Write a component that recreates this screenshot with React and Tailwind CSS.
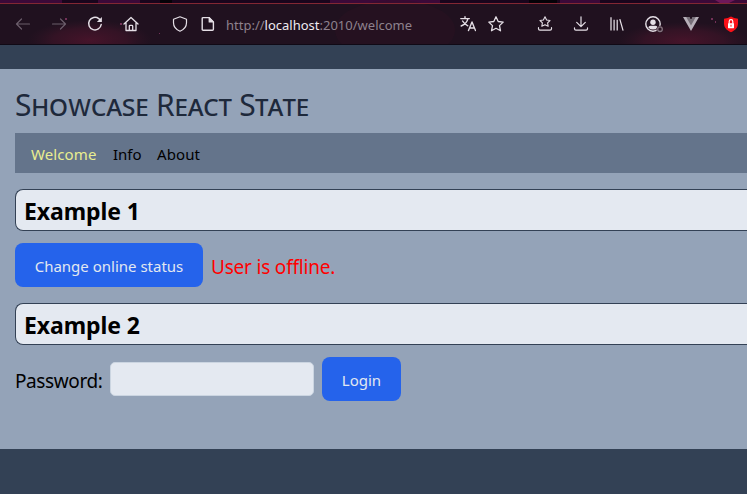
import React from "react";

function Icon({ children, className = "" }) {
  return (
    <svg viewBox="0 0 16 16" width="16" height="16" fill="none" stroke="currentColor" strokeWidth="1.2" strokeLinecap="round" strokeLinejoin="round" className={`block shrink-0 ${className}`}>
      {children}
    </svg>
  );
}

const STAR = "M8 .8 10.2 5.5 15.2 6.1 11.5 9.6 12.5 14.8 8 12.3 3.5 14.8 4.5 9.6 .8 6.1 5.8 5.5Z";

function ThemeArtwork() {
  return (
    <svg className="absolute inset-0" width="747" height="45" viewBox="0 0 747 45">
      <defs>
        <radialGradient id="glow">
          <stop offset="0" stopColor="#4a142b" stopOpacity=".9" />
          <stop offset=".6" stopColor="#3e1428" stopOpacity=".65" />
          <stop offset="1" stopColor="#321526" stopOpacity="0" />
        </radialGradient>
      </defs>
      <rect width="747" height="45" fill="#20111f" />
      <rect width="747" height="3" fill="#19051c" />
      <path d="M0 0H62V3H0ZM98 0H140V3H98ZM330 0H440V3H330ZM560 0H600V3H560ZM650 0H747V3H650Z" fill="#3c0938" />
      <path d="M160 0H172V3H160ZM529 0H557V3H529Z" fill="#050207" />
      <ellipse cx="90" cy="40" rx="62" ry="20" fill="url(#glow)" />
      <ellipse cx="684" cy="41" rx="66" ry="19" fill="url(#glow)" />
      <ellipse cx="395" cy="30" rx="60" ry="30" fill="#301223" opacity=".35" />
      <path d="M715 0H735L729 3H720Z" fill="#85206a" opacity=".7" />
      <g fill="#733158">
        <rect x="65" y="18" width="2" height="2" />
        <rect x="120" y="23" width="2" height="2" />
        <rect x="711" y="18" width="2" height="2" />
        <rect x="715" y="21" width="1" height="2" />
        <rect x="159" y="33" width="1" height="1" />
      </g>
      <rect y="3" width="747" height="1" fill="#822733" />
      <rect y="44" width="747" height="1" fill="#100915" />
    </svg>
  );
}

function BrowserBar() {
  return (
    <header className="relative h-[45px] overflow-hidden text-[#e5dfe6]">
      <ThemeArtwork />
      <div className="relative flex h-[45px] items-center pt-[3px] pl-[15px]">
        <Icon className="text-[#6b5e6b]"><path d="M14.500 8H1.500M6.500 3 1.500 8l5 5" /></Icon>
        <Icon className="ml-5 text-[#6b5e6b]"><path d="M1.500 8h13M9.500 3l5 5-5 5" /></Icon>
        <Icon className="ml-5">
          <path d="M14.200 8.500A6.300 6.300 0 1 1 11.800 2.600L13 3.700" strokeWidth="1.500" />
          <path d="M14.900 1v5h-5Z" fill="currentColor" stroke="none" />
        </Icon>
        <Icon className="ml-5">
          <path d="M1 8 8 1.500 15 8M3 6.800v7.700h10V6.800M6.300 14.300v-4.200q0-.8.8-.8h1.800q.8 0 .8.8v4.200" strokeWidth="1.300" />
        </Icon>
        <Icon className="ml-[33px]">
          <path d="M8 .8 14.500 3.200v3.600c0 3.600-2.500 6.800-6.500 8.400-4-1.600-6.500-4.800-6.500-8.400V3.200Z" />
        </Icon>
        <Icon className="ml-3">
          <path d="M3.200 1.600H9l4.400 4.300v7.300q0 1-1 1H3.200q-1 0-1-1V2.600q0-1 1-1Z" strokeWidth="1.400" />
          <path d="M9.200 1.800v4.100h4Z" fill="currentColor" />
        </Icon>
        <div className="ml-[10px] w-[234px] whitespace-nowrap pt-[2px] font-['Noto_Sans',sans-serif] text-[13px] leading-5 text-[#8e818d]">
          http://<span className="text-[#eeeaf0]">localhost</span>:2010/welcome
        </div>
        <Icon>
          <path d="M.8 2.600h8.500M5 .8v1.800M7.800 2.800C7.200 6 4.800 8.400 1.200 10M2.600 5c1.200 2.200 3 3.800 5.200 4.800M8.500 14.600 12 6l3.500 8.600M9.600 12h4.800" strokeWidth="1.400" />
        </Icon>
        <Icon className="ml-3"><path d={STAR} strokeWidth="1.300" /></Icon>
        <Icon className="ml-[33px]">
          <path d="M8 .8 9.600 4 13 4.500 10.600 6.900 11.200 10.300 8 8.700 4.800 10.300 5.400 6.900 3 4.500 6.400 4Z" strokeWidth="1.100" />
          <path d="M1.500 11.700v1.100q0 1.400 1.400 1.400h10.200q1.400 0 1.400-1.400v-1.100" />
        </Icon>
        <Icon className="ml-5">
          <path d="M8 .8v9.700M3.700 6.400 8 10.700l4.300-4.300M1.500 11.800v1q0 1.400 1.400 1.400h10.200q1.400 0 1.400-1.400v-1" />
        </Icon>
        <Icon className="ml-5"><path d="M2 1.200v13.400M5.100 3.700v10.900M8.200 3.700v10.900M10.800 3.200l3.300 11.400" strokeWidth="1.250" strokeLinecap="butt" /></Icon>
        <svg className="ml-5 block shrink-0" width="20" height="18" viewBox="0 0 20 18">
          <circle cx="8" cy="9" r="7.200" fill="none" stroke="currentColor" strokeWidth="1.400" />
          <circle cx="8" cy="7.200" r="2.700" fill="currentColor" />
          <path d="M3.300 12.400q.4-1.600 2.200-1.600h5q1.800 0 2.200 1.600Q10.800 14.600 8 14.600T3.300 12.400Z" fill="currentColor" />
          <circle cx="15" cy="14.200" r="3.500" fill="#2b1524" />
          <circle cx="15" cy="14.200" r="2.300" fill="none" stroke="#85747f" strokeWidth="1.300" />
        </svg>
        <svg className="ml-[18px] block shrink-0" width="16" height="16" viewBox="0 0 16 16">
          <path d="M0 1h6.200L8 4l1.800-3H16L8 15Z" fill="#b7b0b9" />
          <path d="M3.200 1h3L8 4l1.800-3h3L8 9.400Z" fill="#777079" />
        </svg>
        <svg className="ml-6 block shrink-0" width="16" height="17" viewBox="0 0 16 17">
          <path d="M8 .5q3 2 7 2.300v4.500c0 4.200-2.500 7-7 9-4.500-2-7-4.800-7-9V2.800Q5 2.500 8 .5Z" fill="#fa1118" />
          <path d="M6.200 7.700V5.500a1.800 1.800 0 0 1 3.600 0v2.200" fill="none" stroke="white" strokeWidth="1.200" />
          <rect x="5" y="7.200" width="6" height="5" rx=".4" fill="white" />
          <rect x="7.500" y="8.700" width="1" height="2" fill="#fa1118" />
        </svg>
      </div>
    </header>
  );
}

function ExampleHeading({ children }) {
  return (
    <h2 className="flex h-[42px] items-center rounded-l-lg border border-r-0 border-[#334155] bg-[#e4e9f1] pt-[1px] pl-2 text-[23px] font-bold leading-8 tracking-[-0.1px] text-black">
      {children}
    </h2>
  );
}

function Button({ children, className }) {
  return (
    <button className={`flex h-11 shrink-0 items-center justify-center whitespace-nowrap rounded-lg bg-[#2563eb] pt-[2px] text-[15px] text-[#e2e8f0] ${className}`}>
      {children}
    </button>
  );
}

export default function App() {
  return (
    <div className="h-[494px] w-[747px] overflow-hidden bg-[#334155] font-['Noto_Sans',sans-serif]">
      <BrowserBar />
      <main className="mt-6 h-[380px] bg-[#94a3b8] pt-[18px] pl-[15px]">
        <h1 className="h-[46px] whitespace-nowrap text-[30px] leading-9 tracking-[-0.170px] text-[#1e293b] [font-variant:small-caps]">Showcase React State</h1>
        <nav className="flex h-10 items-center gap-4 bg-[#64748b] pt-[2px] pl-4 text-[15px] text-black">
          <a className="w-[66px] whitespace-nowrap tracking-[0.1px] text-[#e9ee90]">Welcome</a>
          <a className="w-7 whitespace-nowrap">Info</a>
          <a className="tracking-[0.1px]">About</a>
        </nav>
        <section className="mt-4">
          <ExampleHeading>Example 1</ExampleHeading>
          <div className="mt-3 flex items-center gap-2">
            <Button className="w-[188px]">Change online status</Button>
            <p className="whitespace-nowrap pt-1 text-[19px] leading-7 tracking-[-0.2px] text-[#ff0000]">User is offline.</p>
          </div>
        </section>
        <section className="mt-4">
          <ExampleHeading>Example 2</ExampleHeading>
          <div className="mt-3 flex items-center">
            <label className="w-[95px] shrink-0 whitespace-nowrap pt-1 text-[19px] leading-7 tracking-[-0.4px] text-black">Password:</label>
            <input type="password" className="h-[34px] w-[204px] rounded-[5px] border border-[#cbd5e1] bg-[#e4e9f1]" />
            <Button className="ml-2 w-[79px]">Login</Button>
          </div>
        </section>
      </main>
    </div>
  );
}
